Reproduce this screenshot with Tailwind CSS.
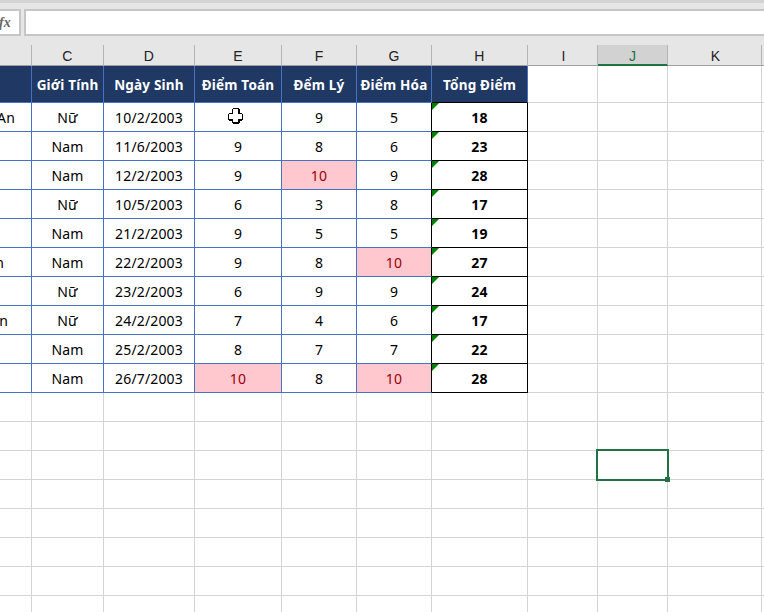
<!DOCTYPE html>
<html>
<head>
<meta charset="utf-8">
<script src="https://cdn.jsdelivr.net/npm/@tailwindcss/browser@4"></script>
</head>
<body class="m-0">
<div class="relative h-[612px] w-[764px] overflow-hidden bg-white font-['Noto_Sans','DejaVu_Sans',sans-serif] text-[14px] tracking-[0.15px] text-black">

  <!-- formula bar -->
  <div class="flex h-[45px] items-start gap-[3px] border-t-[3px] border-[#d4d4d4] bg-[#e6e6e6] pt-[6px]">
    <div class="flex h-[27px] w-[21px] items-center overflow-hidden border-2 border-l-0 border-[#c6c6c6] bg-white font-['Liberation_Serif',serif] text-[14px] font-bold text-[#666] italic"><span class="-ml-px">fx</span></div>
    <div class="h-[27px] flex-1 border-2 border-r-0 border-[#c6c6c6] bg-white"></div>
  </div>

  <!-- column headers -->
  <div class="grid h-[21px] grid-cols-[32px_72px_91px_87px_75px_75px_96px_70px_70px_94px_2px] border-b border-[#9f9f9f] bg-[#e6e6e6] text-center font-['Liberation_Sans',sans-serif] text-[14px] leading-[22px] text-[#222]">
    <div class="border-r border-[#b4b4b4]"></div>
    <div class="border-r border-[#b4b4b4]">C</div>
    <div class="border-r border-[#b4b4b4]">D</div>
    <div class="border-r border-[#b4b4b4]">E</div>
    <div class="border-r border-[#b4b4b4]">F</div>
    <div class="border-r border-[#b4b4b4]">G</div>
    <div class="border-r border-[#b4b4b4]">H</div>
    <div class="border-r border-[#b4b4b4] pl-[2px]">I</div>
    <div class="h-[21px] border-r border-b-2 border-r-[#b4b4b4] border-b-[#217346] bg-[#d2d2d2] text-[#217346]">J</div>
    <div class="border-r border-[#b4b4b4] pl-[2px]">K</div>
    <div></div>
  </div>

  <!-- sheet -->
  <div class="grid grid-cols-[32px_72px_91px_87px_75px_75px_96px_70px_70px_94px_2px] grid-rows-[37px] auto-rows-[29px] text-center leading-[30px]">
    <!-- table header -->
    <div class="border-r border-b border-[#4472c4] bg-[#1f3864]"></div>
    <div class="border-r border-b border-[#4472c4] bg-[#1f3864] text-[13.5px] leading-[38px] font-bold tracking-[0.2px] text-white">Giới Tính</div>
    <div class="border-r border-b border-[#4472c4] bg-[#1f3864] text-[13.5px] leading-[38px] font-bold tracking-[0.2px] text-white">Ngày Sinh</div>
    <div class="border-r border-b border-[#4472c4] bg-[#1f3864] text-[13.5px] leading-[38px] font-bold tracking-[0.2px] text-white">Điểm Toán</div>
    <div class="border-r border-b border-[#4472c4] bg-[#1f3864] text-[13.5px] leading-[38px] font-bold tracking-[0.2px] text-white">Đểm Lý</div>
    <div class="border-r border-b border-[#4472c4] bg-[#1f3864] text-[13.5px] leading-[38px] font-bold tracking-[0.2px] text-white">Điểm Hóa</div>
    <div class="border-r border-b border-r-[#4472c4] border-b-black bg-[#1f3864] text-[13.5px] leading-[38px] font-bold tracking-[0.2px] text-white">Tổng Điểm</div>
    <div class="border-r border-b border-[#d4d4d4]"></div>
    <div class="border-r border-b border-[#d4d4d4]"></div>
    <div class="border-r border-b border-[#d4d4d4]"></div>
    <div class="border-b border-[#d4d4d4]"></div>

    <!-- row 1 -->
    <div class="flex justify-end overflow-hidden border-r border-b border-[#4472c4] pr-[16px]">An</div>
    <div class="border-r border-b border-[#4472c4]">Nữ</div>
    <div class="border-r border-b border-[#4472c4]">10/2/2003</div>
    <div class="border-r border-b border-[#4472c4]"></div>
    <div class="border-r border-b border-[#4472c4]">9</div>
    <div class="border-r border-b border-r-black border-b-[#4472c4]">5</div>
    <div class="relative border-r border-b border-black font-bold"><span class="absolute top-0 left-0 h-0 w-0 border-t-[7px] border-r-[7px] border-t-[#008000] border-r-transparent"></span>18</div>
    <div class="border-r border-b border-[#d4d4d4]"></div>
    <div class="border-r border-b border-[#d4d4d4]"></div>
    <div class="border-r border-b border-[#d4d4d4]"></div>
    <div class="border-b border-[#d4d4d4]"></div>

    <!-- row 2 -->
    <div class="overflow-hidden border-r border-b border-[#4472c4]"></div>
    <div class="border-r border-b border-[#4472c4]">Nam</div>
    <div class="border-r border-b border-[#4472c4]">11/6/2003</div>
    <div class="border-r border-b border-[#4472c4]">9</div>
    <div class="border-r border-b border-[#4472c4]">8</div>
    <div class="border-r border-b border-r-black border-b-[#4472c4]">6</div>
    <div class="relative border-r border-b border-black font-bold"><span class="absolute top-0 left-0 h-0 w-0 border-t-[7px] border-r-[7px] border-t-[#008000] border-r-transparent"></span>23</div>
    <div class="border-r border-b border-[#d4d4d4]"></div>
    <div class="border-r border-b border-[#d4d4d4]"></div>
    <div class="border-r border-b border-[#d4d4d4]"></div>
    <div class="border-b border-[#d4d4d4]"></div>

    <!-- row 3 -->
    <div class="overflow-hidden border-r border-b border-[#4472c4]"></div>
    <div class="border-r border-b border-[#4472c4]">Nam</div>
    <div class="border-r border-b border-[#4472c4]">12/2/2003</div>
    <div class="border-r border-b border-[#4472c4]">9</div>
    <div class="border-r border-b border-[#4472c4] bg-[#ffc7ce] text-[#9c0006]">10</div>
    <div class="border-r border-b border-r-black border-b-[#4472c4]">9</div>
    <div class="relative border-r border-b border-black font-bold"><span class="absolute top-0 left-0 h-0 w-0 border-t-[7px] border-r-[7px] border-t-[#008000] border-r-transparent"></span>28</div>
    <div class="border-r border-b border-[#d4d4d4]"></div>
    <div class="border-r border-b border-[#d4d4d4]"></div>
    <div class="border-r border-b border-[#d4d4d4]"></div>
    <div class="border-b border-[#d4d4d4]"></div>

    <!-- row 4 -->
    <div class="overflow-hidden border-r border-b border-[#4472c4]"></div>
    <div class="border-r border-b border-[#4472c4]">Nữ</div>
    <div class="border-r border-b border-[#4472c4]">10/5/2003</div>
    <div class="border-r border-b border-[#4472c4]">6</div>
    <div class="border-r border-b border-[#4472c4]">3</div>
    <div class="border-r border-b border-r-black border-b-[#4472c4]">8</div>
    <div class="relative border-r border-b border-black font-bold"><span class="absolute top-0 left-0 h-0 w-0 border-t-[7px] border-r-[7px] border-t-[#008000] border-r-transparent"></span>17</div>
    <div class="border-r border-b border-[#d4d4d4]"></div>
    <div class="border-r border-b border-[#d4d4d4]"></div>
    <div class="border-r border-b border-[#d4d4d4]"></div>
    <div class="border-b border-[#d4d4d4]"></div>

    <!-- row 5 -->
    <div class="overflow-hidden border-r border-b border-[#4472c4]"></div>
    <div class="border-r border-b border-[#4472c4]">Nam</div>
    <div class="border-r border-b border-[#4472c4]">21/2/2003</div>
    <div class="border-r border-b border-[#4472c4]">9</div>
    <div class="border-r border-b border-[#4472c4]">5</div>
    <div class="border-r border-b border-r-black border-b-[#4472c4]">5</div>
    <div class="relative border-r border-b border-black font-bold"><span class="absolute top-0 left-0 h-0 w-0 border-t-[7px] border-r-[7px] border-t-[#008000] border-r-transparent"></span>19</div>
    <div class="border-r border-b border-[#d4d4d4]"></div>
    <div class="border-r border-b border-[#d4d4d4]"></div>
    <div class="border-r border-b border-[#d4d4d4]"></div>
    <div class="border-b border-[#d4d4d4]"></div>

    <!-- row 6 -->
    <div class="flex justify-end overflow-hidden border-r border-b border-[#4472c4] pr-[27px]">n</div>
    <div class="border-r border-b border-[#4472c4]">Nam</div>
    <div class="border-r border-b border-[#4472c4]">22/2/2003</div>
    <div class="border-r border-b border-[#4472c4]">9</div>
    <div class="border-r border-b border-[#4472c4]">8</div>
    <div class="border-r border-b border-r-black border-b-[#4472c4] bg-[#ffc7ce] text-[#9c0006]">10</div>
    <div class="relative border-r border-b border-black font-bold"><span class="absolute top-0 left-0 h-0 w-0 border-t-[7px] border-r-[7px] border-t-[#008000] border-r-transparent"></span>27</div>
    <div class="border-r border-b border-[#d4d4d4]"></div>
    <div class="border-r border-b border-[#d4d4d4]"></div>
    <div class="border-r border-b border-[#d4d4d4]"></div>
    <div class="border-b border-[#d4d4d4]"></div>

    <!-- row 7 -->
    <div class="overflow-hidden border-r border-b border-[#4472c4]"></div>
    <div class="border-r border-b border-[#4472c4]">Nữ</div>
    <div class="border-r border-b border-[#4472c4]">23/2/2003</div>
    <div class="border-r border-b border-[#4472c4]">6</div>
    <div class="border-r border-b border-[#4472c4]">9</div>
    <div class="border-r border-b border-r-black border-b-[#4472c4]">9</div>
    <div class="relative border-r border-b border-black font-bold"><span class="absolute top-0 left-0 h-0 w-0 border-t-[7px] border-r-[7px] border-t-[#008000] border-r-transparent"></span>24</div>
    <div class="border-r border-b border-[#d4d4d4]"></div>
    <div class="border-r border-b border-[#d4d4d4]"></div>
    <div class="border-r border-b border-[#d4d4d4]"></div>
    <div class="border-b border-[#d4d4d4]"></div>

    <!-- row 8 -->
    <div class="flex justify-end overflow-hidden border-r border-b border-[#4472c4] pr-[23px]">n</div>
    <div class="border-r border-b border-[#4472c4]">Nữ</div>
    <div class="border-r border-b border-[#4472c4]">24/2/2003</div>
    <div class="border-r border-b border-[#4472c4]">7</div>
    <div class="border-r border-b border-[#4472c4]">4</div>
    <div class="border-r border-b border-r-black border-b-[#4472c4]">6</div>
    <div class="relative border-r border-b border-black font-bold"><span class="absolute top-0 left-0 h-0 w-0 border-t-[7px] border-r-[7px] border-t-[#008000] border-r-transparent"></span>17</div>
    <div class="border-r border-b border-[#d4d4d4]"></div>
    <div class="border-r border-b border-[#d4d4d4]"></div>
    <div class="border-r border-b border-[#d4d4d4]"></div>
    <div class="border-b border-[#d4d4d4]"></div>

    <!-- row 9 -->
    <div class="overflow-hidden border-r border-b border-[#4472c4]"></div>
    <div class="border-r border-b border-[#4472c4]">Nam</div>
    <div class="border-r border-b border-[#4472c4]">25/2/2003</div>
    <div class="border-r border-b border-[#4472c4]">8</div>
    <div class="border-r border-b border-[#4472c4]">7</div>
    <div class="border-r border-b border-r-black border-b-[#4472c4]">7</div>
    <div class="relative border-r border-b border-black font-bold"><span class="absolute top-0 left-0 h-0 w-0 border-t-[7px] border-r-[7px] border-t-[#008000] border-r-transparent"></span>22</div>
    <div class="border-r border-b border-[#d4d4d4]"></div>
    <div class="border-r border-b border-[#d4d4d4]"></div>
    <div class="border-r border-b border-[#d4d4d4]"></div>
    <div class="border-b border-[#d4d4d4]"></div>

    <!-- row 10 -->
    <div class="overflow-hidden border-r border-b border-[#4472c4]"></div>
    <div class="border-r border-b border-[#4472c4]">Nam</div>
    <div class="border-r border-b border-[#4472c4]">26/7/2003</div>
    <div class="border-r border-b border-[#4472c4] bg-[#ffc7ce] text-[#9c0006]">10</div>
    <div class="border-r border-b border-[#4472c4]">8</div>
    <div class="border-r border-b border-r-black border-b-[#4472c4] bg-[#ffc7ce] text-[#9c0006]">10</div>
    <div class="relative border-r border-b border-black font-bold"><span class="absolute top-0 left-0 h-0 w-0 border-t-[7px] border-r-[7px] border-t-[#008000] border-r-transparent"></span>28</div>
    <div class="border-r border-b border-[#d4d4d4]"></div>
    <div class="border-r border-b border-[#d4d4d4]"></div>
    <div class="border-r border-b border-[#d4d4d4]"></div>
    <div class="border-b border-[#d4d4d4]"></div>
  </div>

  <!-- empty rows -->
  <div class="h-[220px] bg-[linear-gradient(to_bottom,transparent_28px,#d4d4d4_28px)] bg-[length:100%_29px]">
    <div class="grid h-full grid-cols-[32px_72px_91px_87px_75px_75px_96px_70px_70px_94px_2px]">
      <div class="border-r border-[#d4d4d4]"></div>
      <div class="border-r border-[#d4d4d4]"></div>
      <div class="border-r border-[#d4d4d4]"></div>
      <div class="border-r border-[#d4d4d4]"></div>
      <div class="border-r border-[#d4d4d4]"></div>
      <div class="border-r border-[#d4d4d4]"></div>
      <div class="border-r border-[#d4d4d4]"></div>
      <div class="border-r border-[#d4d4d4]"></div>
      <div class="border-r border-[#d4d4d4]"></div>
      <div class="border-r border-[#d4d4d4]"></div>
      <div></div>
    </div>
  </div>

  <!-- selected cell -->
  <div class="absolute top-[449px] left-[596px] h-[32px] w-[73px] border-2 border-[#217346]"></div>
  <div class="absolute top-[477px] left-[665px] h-[5px] w-[5px] bg-[#217346]"></div>

  <!-- pointer -->
  <svg class="absolute top-[108px] left-[228px]" width="16" height="16" viewBox="0 0 16 16" shape-rendering="crispEdges">
    <path d="M5 0h6v1h1v4h2v1h1v6h-1v1h-2v2h-1v1H5v-1H4v-2H1v-1H0V6h1V5h3V1h1z" fill="#000"/>
    <path d="M5 1h5v5h4v5h-4v3H5v-3H1V6h4z" fill="#fff"/>
  </svg>
</div>
</body>
</html>
